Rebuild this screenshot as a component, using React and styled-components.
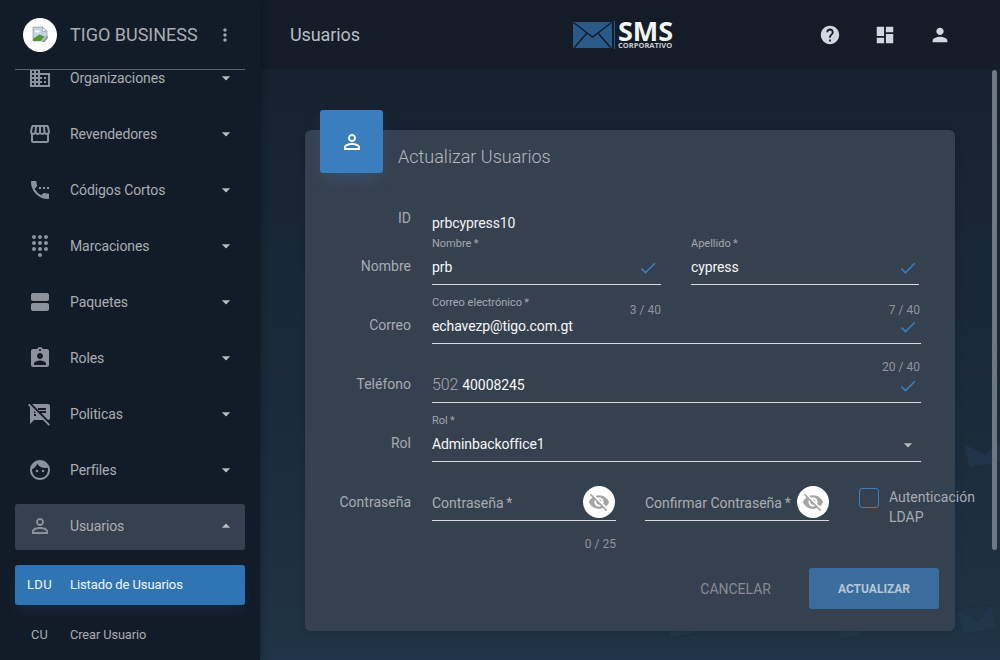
import React from "react";
import styled, { createGlobalStyle } from "styled-components";
import {
  MdDomain, MdOutlineStorefront, MdSettingsPhone, MdDialpad, MdViewAgenda, MdAssignmentInd,
  MdSpeakerNotesOff, MdFace, MdPersonOutline, MdHelp, MdDashboard, MdPerson, MdVisibilityOff,
  MdDone, MdMoreVert, MdArrowDropDown, MdArrowDropUp,
} from "react-icons/md";

const Global = createGlobalStyle`
  html, body { margin: 0; padding: 0; height: 100%; background: #15202c; }
  body { font-family: Roboto, "Liberation Sans", sans-serif; overflow: hidden; }
  * { box-sizing: border-box; }
`;

const Page = styled.div`
  width: 1000px; height: 660px; display: flex; overflow: hidden; position: relative;
`;
const Sidebar = styled.aside`
  width: 260px; height: 660px; flex: none; display: flex; flex-direction: column;
  background: #121c28; box-shadow: 2px 0 6px rgba(0,0,0,.25); z-index: 2;
`;
const Brand = styled.div`
  height: 70px; flex: none; margin: 0 15px; padding-left: 8px; display: flex; align-items: center;
  border-bottom: 1px solid #5b636d; color: #a9adb2; font-size: 18px;
`;
const Avatar = styled.div`
  width: 34px; height: 34px; border-radius: 50%; background: #fff; flex: none; margin-right: 13px;
  display: flex; align-items: center; justify-content: center;
`;
const BrandName = styled.span` flex: 1; white-space: nowrap; `;
const BrandMenu = styled.span`
  display: flex; margin-right: 10px; font-size: 20px; color: #9ea3a9;
`;
const NavClip = styled.nav` flex: 1; overflow: hidden; `;
const NavList = styled.div`
  margin: -15px 15px 0; display: flex; flex-direction: column;
`;
const NavItem = styled.div`
  height: 46px; margin-bottom: 10px; display: flex; align-items: center; border-radius: 3px;
  color: #a9adb2; font-size: 14px; padding-right: 9px; letter-spacing: -.1px;
  margin-top: ${(p) => (p.$open ? "1px" : "0")};
  padding-bottom: ${(p) => (p.$open ? "2px" : "0")};
  background: ${(p) => (p.$open ? "#36414f" : "transparent")};
`;
const NavIcon = styled.span`
  width: 55px; padding-left: 13px; flex: none; display: flex; font-size: 24px; color: #8b929c;
`;
const NavLabel = styled.span` flex: 1; `;
const Caret = styled.span` display: flex; font-size: 20px; color: #b8bbc0; `;
const SubItem = styled.div`
  height: 40px; display: flex; align-items: center; border-radius: 3px; margin-top: 5px;
  letter-spacing: -.1px;
  font-size: ${(p) => (p.$active ? "13px" : "12.8px")};
  color: ${(p) => (p.$active ? "#f2f5f8" : "#a9adb2")};
  background: ${(p) => (p.$active ? "#3075b3" : "transparent")};
  box-shadow: ${(p) => (p.$active ? "0 8px 14px -4px rgba(47,117,179,.18)" : "none")};
  margin-bottom: ${(p) => (p.$active ? "4px" : "0")};
  padding-bottom: ${(p) => (p.$active ? "1px" : "0")};
`;
const SubCode = styled.span`
  width: 49px; margin-right: 6px; text-align: center; flex: none; letter-spacing: .3px;
`;

const Main = styled.main`
  flex: 1; min-width: 0; display: flex; flex-direction: column; position: relative;
  background: linear-gradient(180deg, #141e2a 0%, #16222f 15%, #1a2b3b 60%, #1f3446 100%);
`;
const Topbar = styled.header`
  height: 69px; flex: none; display: flex; align-items: center; padding: 0 49px 0 30px;
  background: #131c27; color: #b9bec4; font-size: 18px; letter-spacing: -.1px;
`;
const PageTitle = styled.div` width: 283px; flex: none; margin-top: -1px; `;
const Logo = styled.div` display: flex; align-items: center; flex: none; color: #f4f6f8; letter-spacing: 0; `;
const LogoWords = styled.div`
  display: flex; flex-direction: column; margin-left: 3px; font-family: "Open Sans", sans-serif;
`;
const LogoBig = styled.span` font-size: 27px; line-height: 22px; font-weight: 700; `;
const LogoSmall = styled.span` font-size: 7.5px; line-height: 7px; font-weight: 700; color: #c8ccd0; `;
const TopIcons = styled.div`
  margin-left: auto; display: flex; gap: 33px; color: #d0d7de; margin-top: 1px;
  svg { display: block; width: 22px; height: 22px; }
`;
const Content = styled.div` flex: 1; padding: 61px 45px 0; position: relative; `;
const Watermark = styled.svg`
  position: absolute; color: #223a50; opacity: .6;
`;
const Card = styled.section`
  width: 650px; height: 501px; background: #36414f; border-radius: 6px; position: relative;
  padding: 15px 34px 0 0; box-shadow: 0 2px 8px rgba(0,0,0,.12);
`;
const Tile = styled.div`
  position: absolute; left: 15px; top: -20px; width: 63px; height: 63px; border-radius: 3px;
  background: #3a7ebf; color: #fff; display: flex; align-items: center; justify-content: center;
  font-size: 24px; box-shadow: 0 8px 18px -4px rgba(58,126,191,.3);
`;
const CardTitle = styled.h2`
  margin: 0 0 0 93px; height: 24px; font-size: 18px; line-height: 24px; font-weight: 300; color: #b3b8bf;
`;
const Form = styled.div` margin-top: 37px; `;
const Row = styled.div`
  display: grid; grid-template-columns: 106px 1fr; column-gap: 21px;
  height: ${(p) => p.$h || 48}px; margin-bottom: ${(p) => (p.$mb ?? 11)}px;
  position: relative;
`;
const RowLabel = styled.div`
  text-align: right; font-size: 14px; line-height: 18px; color: #a6abb2;
  padding-top: ${(p) => p.$top || 0}px;
`;
const IdValue = styled.div`
  font-size: 14px; line-height: 18px; color: #f1f3f5; padding-top: 8px; letter-spacing: -.1px;
`;
const Fields = styled.div`
  display: grid; grid-template-columns: ${(p) => p.$cols || "1fr"}; column-gap: ${(p) => p.$gap || 0}px;
`;
const Field = styled.div`
  position: relative; height: 48px; border-bottom: 1px solid #d7d9db;
`;
const Float = styled.div`
  font-size: 11px; line-height: 14px; color: #a3a8af; height: 14px;
`;
const Value = styled.div`
  margin-top: 6px; font-size: 14px; line-height: 20px; font-weight: 450; color: #f6f7f8; letter-spacing: -.1px;
`;
const Tick = styled.span`
  position: absolute; right: ${(p) => p.$r ?? 1}px; bottom: 6px; display: flex; font-size: 20px; color: #3a7ebf;
`;
const Counter = styled.div`
  position: absolute; right: ${(p) => p.$r ?? 0}px; top: calc(100% + ${(p) => p.$t ?? 17}px);
  font-size: 12px; line-height: 14px; color: #8f959c;
`;
const Prefix = styled.span` font-size: 16px; font-weight: 300; color: #a3a8af; margin-right: 4px; `;
const Select = styled.span` position: absolute; right: 3px; bottom: 6px; display: flex; font-size: 20px; color: #b8bbc0; `;
const PassField = styled.div`
  position: relative; height: 36px; border-bottom: 1px solid #d7d9db; font-size: 14px; color: #a9adb2;
  padding-top: 9px; line-height: 18px;
`;
const Eye = styled.span`
  position: absolute; right: ${(p) => p.$r ?? 1}px; top: 1px; width: 32px; height: 32px; border-radius: 50%; background: #fff;
  display: flex; align-items: center; justify-content: center; font-size: 22px; color: #a5a5a5;
`;
const Ldap = styled.div` display: flex; align-items: flex-start; margin-top: 2px; margin-left: 1px; `;
const Box = styled.span`
  width: 20px; height: 20px; border: 1px solid #3a7ebf; border-radius: 3px; flex: none; margin-right: 10px;
  margin-top: 1px;
`;
const LdapText = styled.span` font-size: 14px; line-height: 20px; color: #a6abb2; width: 90px; `;
const Actions = styled.div`
  position: absolute; right: 16px; bottom: 22px; display: flex; align-items: center; gap: 38px;
`;
const Cancel = styled.span` font-size: 14px; color: #868b92; `;
const Save = styled.span`
  width: 130px; height: 41px; display: flex; align-items: center; justify-content: center;
  background: #3a6c9e; color: #b7c5d3; border-radius: 3px; font-size: 12px; font-weight: 700;
`;
const Scroll = styled.div`
  position: absolute; right: 3px; top: 70px; width: 5px; height: 480px; border-radius: 3px; background: #6f7780; z-index: 3;
`;

const BrokenImage = () => (
  <svg width="17" height="17" viewBox="0 0 16 16">
    <path d="M1 1h9l4 4v5l-4 4H1z" fill="#c4d3e4" stroke="#9aa3ad" strokeWidth=".8" />
    <path d="M10 1v4h4z" fill="#fff" stroke="#9aa3ad" strokeWidth=".8" />
    <ellipse cx="5" cy="5" rx="2.4" ry="1.1" fill="#fff" />
    <path d="M1 14v-2l6-4 5 2-4 4z" fill="#4f9a2e" />
    <path d="M9 15l6-6v2l-3 4z" fill="#8d9aa6" />
  </svg>
);

const LogoMark = () => (
  <svg width="42" height="28" viewBox="0 0 42 28">
    <rect x="0" y="1" width="39" height="26" fill="#2a5a88" />
    <path d="M0.5 1.5 L19.5 16 L38.5 1.5 M1 27 L14 12 M38 27 L25 12" fill="none" stroke="#121c28" strokeWidth="1.4" />
    <rect x="41" y="0" width="1" height="28" fill="#2a5a88" />
  </svg>
);

const Envelope = ({ style, w = 60 }) => (
  <Watermark style={style} width={w} height={w * 0.74} viewBox="0 0 60 44">
    <path d="M2 8 L50 2 L58 34 L10 42 Z M2 8 L32 24 L50 2" fill="currentColor" stroke="#1a2b3b" strokeWidth="1" />
  </Watermark>
);

const items = [
  ["Organizaciones", MdDomain], ["Revendedores", MdOutlineStorefront], ["Códigos Cortos", MdSettingsPhone],
  ["Marcaciones", MdDialpad], ["Paquetes", MdViewAgenda], ["Roles", MdAssignmentInd],
  ["Politicas", MdSpeakerNotesOff], ["Perfiles", MdFace],
];

export default function App() {
  return (
    <Page>
      <Global />
      <Sidebar>
        <Brand>
          <Avatar><BrokenImage /></Avatar>
          <BrandName>TIGO BUSINESS</BrandName>
          <BrandMenu><MdMoreVert /></BrandMenu>
        </Brand>
        <NavClip>
          <NavList>
            {items.map(([label, Icon]) => (
              <NavItem key={label}>
                <NavIcon><Icon /></NavIcon>
                <NavLabel>{label}</NavLabel>
                <Caret><MdArrowDropDown /></Caret>
              </NavItem>
            ))}
            <NavItem $open>
              <NavIcon><MdPersonOutline /></NavIcon>
              <NavLabel>Usuarios</NavLabel>
              <Caret><MdArrowDropUp /></Caret>
            </NavItem>
            <SubItem $active><SubCode>LDU</SubCode>Listado de Usuarios</SubItem>
            <SubItem><SubCode>CU</SubCode>Crear Usuario</SubItem>
          </NavList>
        </NavClip>
      </Sidebar>
      <Main>
        <Topbar>
          <PageTitle>Usuarios</PageTitle>
          <Logo>
            <LogoMark />
            <LogoWords>
              <LogoBig>SMS</LogoBig>
              <LogoSmall>CORPORATIVO</LogoSmall>
            </LogoWords>
          </Logo>
          <TopIcons><MdHelp /><MdDashboard /><MdPerson /></TopIcons>
        </Topbar>
        <Content>
          <Envelope style={{ left: 702, top: 368 }} w={44} />
          <Envelope style={{ left: 695, top: 534 }} w={44} />
          <Envelope style={{ left: 575, top: 550 }} w={28} />
          <Envelope style={{ left: 405, top: 548 }} w={30} />
          <Card>
            <Tile><MdPersonOutline /></Tile>
            <CardTitle>Actualizar Usuarios</CardTitle>
            <Form>
              <Row $h={31} $mb={0}>
                <RowLabel $top={3}>ID</RowLabel>
                <IdValue>prbcypress10</IdValue>
              </Row>
              <Row>
                <RowLabel $top={20}>Nombre</RowLabel>
                <Fields $cols="229px 228px" $gap={30}>
                  <Field>
                    <Float>Nombre{"\u2009"}*</Float>
                    <Value>prb</Value>
                    <Tick $r={3}><MdDone /></Tick>
                    <Counter $t={19}>3 / 40</Counter>
                  </Field>
                  <Field>
                    <Float>Apellido{"\u2009"}*</Float>
                    <Value>cypress</Value>
                    <Tick><MdDone /></Tick>
                    <Counter $t={19} $r={-1}>7 / 40</Counter>
                  </Field>
                </Fields>
              </Row>
              <Row>
                <RowLabel $top={20}>Correo</RowLabel>
                <Field>
                  <Float>Correo electrónico{"\u2009"}*</Float>
                  <Value>echavezp@tigo.com.gt</Value>
                  <Tick $r={3}><MdDone /></Tick>
                  <Counter $r={1}>20 / 40</Counter>
                </Field>
              </Row>
              <Row>
                <RowLabel $top={20}>Teléfono</RowLabel>
                <Field>
                  <Float />
                  <Value><Prefix>502</Prefix>40008245</Value>
                  <Tick $r={3}><MdDone /></Tick>
                </Field>
              </Row>
              <Row $mb={23}>
                <RowLabel $top={20}>Rol</RowLabel>
                <Field>
                  <Float>Rol{"\u2009"}*</Float>
                  <Value>Adminbackoffice1</Value>
                  <Select><MdArrowDropDown /></Select>
                </Field>
              </Row>
              <Row $h={36}>
                <RowLabel $top={8}>Contraseña</RowLabel>
                <Fields $cols="184px 184px 1fr" $gap={29}>
                  <PassField>
                    Contraseña{"\u2009"}*
                    <Eye><MdVisibilityOff /></Eye>
                    <Counter>0 / 25</Counter>
                  </PassField>
                  <PassField>
                    Confirmar Contraseña{"\u2009"}*
                    <Eye $r={0}><MdVisibilityOff /></Eye>
                  </PassField>
                  <Ldap>
                    <Box />
                    <LdapText>Autenticación LDAP</LdapText>
                  </Ldap>
                </Fields>
              </Row>
            </Form>
            <Actions>
              <Cancel>CANCELAR</Cancel>
              <Save>ACTUALIZAR</Save>
            </Actions>
          </Card>
        </Content>
        <Scroll />
      </Main>
    </Page>
  );
}
